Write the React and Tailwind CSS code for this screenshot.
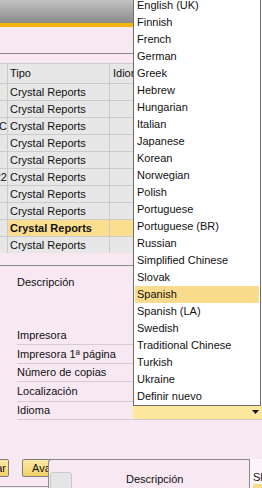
import React from 'react'

const languages = [
  'English (UK)', 'Finnish', 'French', 'German', 'Greek', 'Hebrew', 'Hungarian',
  'Italian', 'Japanese', 'Korean', 'Norwegian', 'Polish', 'Portuguese',
  'Portuguese (BR)', 'Russian', 'Simplified Chinese', 'Slovak', 'Spanish',
  'Spanish (LA)', 'Swedish', 'Traditional Chinese', 'Turkish', 'Ukraine',
  'Definir nuevo',
]

const rows = [
  { code: '' }, { code: '' }, { code: 'C' }, { code: '' }, { code: '' },
  { code: '22' }, { code: '' }, { code: '' }, { code: '', active: true }, { code: '' },
]

const fields = [
  { label: 'Impresora', h: 'h-[19px]' },
  { label: 'Impresora 1ª página', h: 'h-[19px]' },
  { label: 'Número de copias', h: 'h-[18px]' },
  { label: 'Localización', h: 'h-[20px]' },
]

export default function App() {
  return (
    <div className="relative w-[262px] h-[488px] overflow-hidden bg-[#f7e8f1] font-['Liberation_Sans',Arial,sans-serif] text-[11px] text-[#111]">
      {/* window title strip */}
      <div className="h-[23px] bg-gradient-to-b from-[#c2c2c2] to-[#8b8b8b]" />
      <div className="h-[4px] bg-[#f9b40e]" />
      <div className="h-[26px]" />
      <div className="h-px bg-[#8a8a8a]" />
      <div className="h-[9px]" />

      {/* grid */}
      <div className="h-[190px] overflow-hidden bg-[#e7e7e7]">
        <div className="flex h-[21px] border-y border-[#cbcbcb]">
          <div className="w-[8px] border-r border-[#cbcbcb]" />
          <div className="w-[102px] border-r border-[#cbcbcb] pl-[2px] flex items-center">Tipo</div>
          <div className="w-[23px] pl-[3px] flex items-center overflow-hidden whitespace-nowrap">Idioma</div>
          <div className="flex-1" />
        </div>
        {rows.map((r, i) => (
          <div
            key={i}
            className={`flex h-[17px] border-b border-[#cbcbcb] ${r.active ? 'bg-[#fcdf8e] font-bold' : ''}`}
          >
            <div className="w-[8px] border-r border-[#cbcbcb] bg-[#e7e7e7] overflow-hidden flex items-center justify-end whitespace-nowrap font-normal">
              {r.code}
            </div>
            <div className="w-[102px] border-r border-[#cbcbcb] pl-[2px] flex items-center whitespace-nowrap">
              Crystal Reports
            </div>
            <div className="flex-1" />
          </div>
        ))}
      </div>

      <div className="h-[12px]" />
      <div className="h-px bg-[#8a8a8a]" />

      {/* detail form */}
      <div className="pl-[17px] pt-[9px]">
        <div className="h-[14px] flex items-center">Descripción</div>
        <div className="h-[37px]" />
        {fields.map((f) => (
          <div key={f.label} className={`${f.h} border-b border-[#d3cdd3] flex items-center`}>
            {f.label}
          </div>
        ))}
        <div className="h-[18px] border-b border-[#d3cdd3] flex">
          <div className="w-[116px] flex items-center">Idioma</div>
          <div className="flex-1 self-end h-[15px] bg-[#fbe89c] flex items-center justify-end pr-[3px]">
            <svg width="7" height="4" viewBox="0 0 7 4"><path d="M0 0h7L3.5 4z" fill="#111" /></svg>
          </div>
        </div>
      </div>

      <div className="h-[39px]" />
      {/* buttons */}
      <div className="flex gap-[13px] -ml-[22px]">
        <div className="w-[31px] h-[18px] rounded-[2px] border border-[#7e7e7e] bg-gradient-to-b from-[#fdeaa6] to-[#f2d064] flex items-center justify-end pr-[2px] overflow-hidden whitespace-nowrap">
          Actualizar
        </div>
        <div className="w-[70px] h-[18px] rounded-[2px] border border-[#7e7e7e] bg-gradient-to-b from-[#fdeaa6] to-[#f2d064] flex items-center pl-[9px]">
          Avanzado
        </div>
      </div>
      <div className="h-[9px]" />
      <div className="h-px bg-[#9a9a9a]" />

      {/* language dropdown */}
      <div className="absolute left-[133px] top-[-4px] w-[128px] bg-white border border-[#6d6d6d] shadow-[1px_0_0_#ffffff]">
        {languages.map((l) => (
          <div
            key={l}
            className={`h-[17px] mx-[1px] pl-[2px] flex items-center whitespace-nowrap ${l === 'Spanish' ? 'bg-[#f9dc8b]' : ''}`}
          >
            {l}
          </div>
        ))}
      </div>

      {/* overlapping window */}
      <div className="absolute left-[48px] top-[459px] right-0 bottom-0 flex">
        <div className="w-[201px] border-t border-l border-[#8a8a8a] rounded-tl-[4px] bg-[#f7e8f1] flex items-start">
          <div className="mt-[12px] ml-px w-[22px] h-[20px] rounded-[3px] border border-[#c9c9c9] bg-[#e5e5e5]" />
          <div className="ml-[54px] mt-[12px] h-[14px] flex items-center">Descripción</div>
        </div>
        <div className="flex-1 border-l border-[#8a8a8a] bg-[#fbf4f8] flex flex-col pl-[3px] overflow-hidden">
          <div className="h-[11px]" />
          <div className="h-[14px] flex items-center whitespace-nowrap">Slot</div>
          <div className="flex-1 bg-[#f9dc8b]" />
        </div>
      </div>
    </div>
  )
}
